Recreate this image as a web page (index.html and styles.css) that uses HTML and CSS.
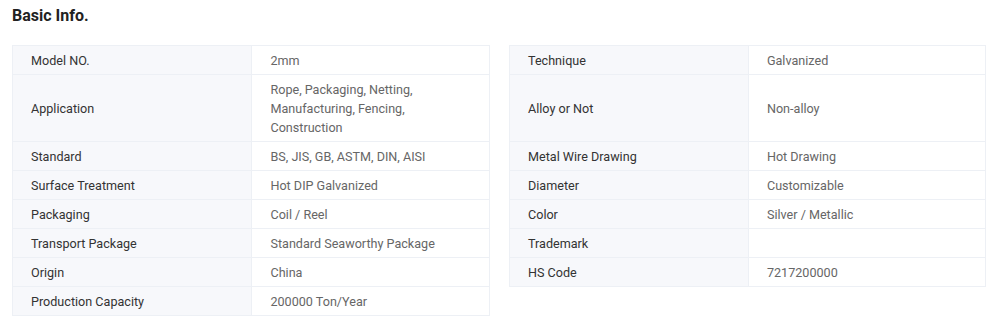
FILE: index.html
```html
<!DOCTYPE html>
<html>
<head>
<meta charset="utf-8">
<link rel="stylesheet" href="styles.css">
</head>
<body>
<div class="page">
  <h2 class="title">Basic Info.</h2>
  <div class="grid">
    <table class="info">
      <colgroup><col class="ck"><col class="cv"></colgroup>
      <tr><td class="k">Model NO.</td><td class="v">2mm</td></tr>
      <tr><td class="k">Application</td><td class="v">Rope, Packaging, Netting,<br>Manufacturing, Fencing,<br>Construction</td></tr>
      <tr><td class="k">Standard</td><td class="v">BS, JIS, GB, ASTM, DIN, AISI</td></tr>
      <tr><td class="k">Surface Treatment</td><td class="v">Hot DIP Galvanized</td></tr>
      <tr><td class="k">Packaging</td><td class="v">Coil / Reel</td></tr>
      <tr><td class="k">Transport Package</td><td class="v">Standard Seaworthy Package</td></tr>
      <tr><td class="k">Origin</td><td class="v">China</td></tr>
      <tr><td class="k">Production Capacity</td><td class="v">200000 Ton/Year</td></tr>
    </table>
    <table class="info">
      <colgroup><col class="ck"><col class="cv"></colgroup>
      <tr><td class="k">Technique</td><td class="v">Galvanized</td></tr>
      <tr class="tall"><td class="k">Alloy or Not</td><td class="v">Non-alloy</td></tr>
      <tr><td class="k">Metal Wire Drawing</td><td class="v">Hot Drawing</td></tr>
      <tr><td class="k">Diameter</td><td class="v">Customizable</td></tr>
      <tr><td class="k">Color</td><td class="v">Silver / Metallic</td></tr>
      <tr><td class="k">Trademark</td><td class="v"></td></tr>
      <tr><td class="k">HS Code</td><td class="v">7217200000</td></tr>
    </table>
  </div>
</div>
</body>
</html>
```
FILE: styles.css
```css
html, body {
  margin: 0;
  padding: 0;
  background: #fff;
}
.page {
  padding: 4px 12px 0 12px;
  font-family: Roboto, "Liberation Sans", Arial, sans-serif;
}
.title {
  margin: 0;
  font-size: 16px;
  line-height: 24px;
  font-weight: 700;
  color: #222;
}
.grid {
  margin-top: 17px;
  display: grid;
  grid-template-columns: 478px 477px;
  column-gap: 19px;
  align-items: start;
}
.info {
  width: 100%;
  border-collapse: collapse;
  table-layout: fixed;
  border: 1px solid #edf0f5;
  font-size: 12.6px;
  line-height: 19px;
}
.info col.ck {
  width: 50.2%;
}
.info td {
  border: 1px solid #edf0f5;
  padding: 5px 18px 4px 18px;
  vertical-align: middle;
}
.info td.k {
  background: #f7f8fb;
  color: #333;
}
.info td.v {
  background: #fff;
  color: #666;
}
.info tr.tall td {
  height: 57px;
}
```
